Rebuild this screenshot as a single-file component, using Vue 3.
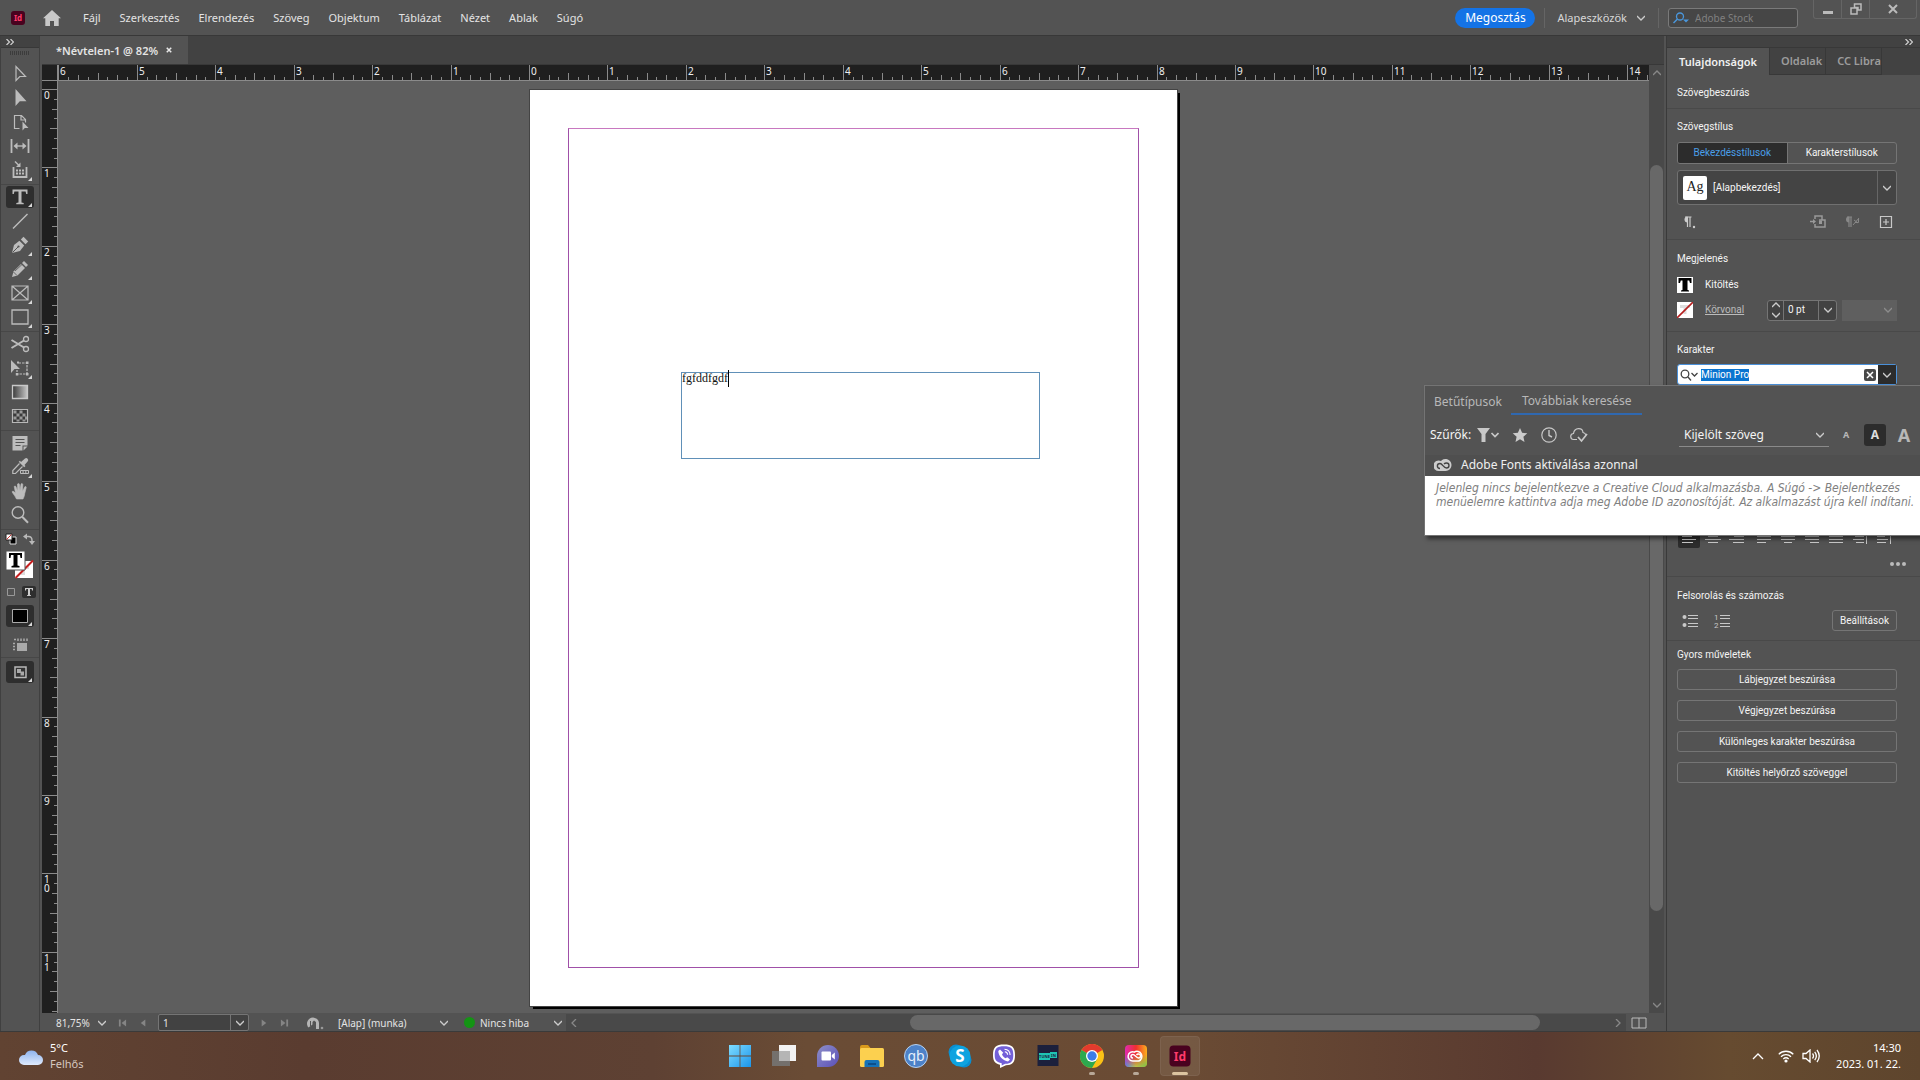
<script setup>
import { ref, computed, onMounted, onUnmounted } from 'vue'

const menus = ['Fájl', 'Szerkesztés', 'Elrendezés', 'Szöveg', 'Objektum', 'Táblázat', 'Nézet', 'Ablak', 'Súgó']

const stockQuery = ref('')
const fontName = ref('Minion Pro')
const pageNumber = ref('1')
const strokeWidth = ref('0 pt')

// toolbox icons, drawn on a 20x20 grid
const toolGroups = [
  [
    { name: 'Kijelölés', svg: '<path d="M6 2.500v14l3.800-4h5.700z" fill="none" stroke="currentColor" stroke-width="1.200"/>' },
    { name: 'Közvetlen kijelölés', svg: '<path d="M5.500 1v17l4.300-4.800h6.700z" fill="currentColor"/>' },
    { name: 'Oldal', svg: '<path d="M9.500 16.500H4.500v-13h7l4 4v3M11 3.500v4.500h4.500" fill="none" stroke="currentColor" stroke-width="1.200"/><path d="M12.500 9.500v9l2.300-2.500h3.700z" fill="currentColor"/>' },
    { name: 'Hézag', svg: '<path d="M1.500 3v14M18.500 3v14" stroke="currentColor" stroke-width="1.800"/><path d="M5 10h10" stroke="currentColor" stroke-width="1.400"/><path d="M3.500 10l4-3.500v7zM16.500 10l-4-3.500v7z" fill="currentColor"/>' },
    { name: 'Tartalomgyűjtő', more: true, svg: '<path d="M3.500 7v10h13V7" fill="none" stroke="currentColor" stroke-width="1.800"/><path d="M6 9.500h2v2H6zM9 9.500h2v2H9zM12 9.500h2v2h-2zM6 12.500h2v2H6zM9 12.500h2v2H9zM12 12.500h2v2h-2z" fill="currentColor"/><path d="M5 1.500l4 4" stroke="currentColor" stroke-width="1.500"/><path d="M10.500 2.500V7H6z" fill="currentColor"/>' }
  ],
  [
    { name: 'Szöveg', more: true, active: true, svg: '<path d="M2.500 2.500h15v4.500h-1.300l-.6-2.500h-4.100v11l2.200.5v1.200H6.300v-1.200l2.200-.5v-11H4.400L3.800 7H2.500z" fill="currentColor"/>' },
    { name: 'Vonal', svg: '<path d="M3 17.500L17.500 3" stroke="currentColor" stroke-width="1.500"/>' },
    { name: 'Toll', more: true, svg: '<path d="M2 18l2-8 5.400-4.200 4.800 4.800-4.200 5.400z" fill="currentColor"/><path d="M10.800 4.500l2.700-2.700 4.700 4.700-2.700 2.700z" fill="currentColor"/><path d="M2.500 17.500l5.500-5.500" stroke="#535353" stroke-width="1"/><circle cx="8.500" cy="11.500" r="1.100" fill="#535353"/>' },
    { name: 'Ceruza', more: true, svg: '<path d="M2 18l1.500-5.500 7.500-7.500 4 4-7.500 7.500z" fill="currentColor"/><path d="M12 4l2-2 4 4-2 2z" fill="currentColor"/><path d="M3.500 13l3.500 3.500M5 12l7-6.500" stroke="#535353" stroke-width=".8"/>' },
    { name: 'Téglalapkeret', more: true, svg: '<path d="M2 3h16v14H2zM2 3l16 14M18 3L2 17" fill="none" stroke="currentColor" stroke-width="1.200"/>' },
    { name: 'Téglalap', more: true, svg: '<path d="M2 3h16v14H2z" fill="none" stroke="currentColor" stroke-width="1.300"/>' }
  ],
  [
    { name: 'Olló', svg: '<path d="M1.500 6l12.500 7.500M1.500 14l12.500-7.500" stroke="currentColor" stroke-width="2"/><circle cx="16" cy="5" r="2.500" fill="none" stroke="currentColor" stroke-width="1.300"/><circle cx="16" cy="15" r="2.500" fill="none" stroke="currentColor" stroke-width="1.300"/>' },
    { name: 'Szabad átalakítás', more: true, svg: '<path d="M1 2v13l3.500-4h5.500z" fill="currentColor"/><path d="M8.500 5h8.500v11H7v-4" fill="none" stroke="currentColor" stroke-width="1.200" stroke-dasharray="2.500 1"/><path d="M7 3.500h2v2H7zM16 3.500h2.500V6H16zM16 15h2.500v2.500H16zM5.800 15h2.500v2.500H5.800z" fill="currentColor"/>' },
    { name: 'Színátmenet-színminta', svg: '<defs><linearGradient id="tool-grad"><stop offset="0" stop-color="#3a3a3a"/><stop offset="1" stop-color="#c8c8c8"/></linearGradient></defs><path d="M2.500 3.500h15v13h-15z" fill="url(#tool-grad)" stroke="#c8c8c8" stroke-width="1.300"/>' },
    { name: 'Színátmenet-lágyítás', svg: '<path d="M2.500 3.500h15v13h-15z" fill="#3a3a3a" stroke="#b8b8b8" stroke-width="1.200"/><path d="M3.500 4.500h3v3h-3zM9.500 4.500h3v3h-3zM6.500 7.500h3v3h-3zM12.500 7.500h3v3h-3zM3.500 10.500h3v3h-3zM9.500 10.500h3v3h-3zM15 10.500h2v3h-2zM6.500 13.500h3v2h-3zM12.500 13.500h3v2h-3z" fill="#999"/>' }
  ],
  [
    { name: 'Jegyzet', svg: '<path d="M2.500 3h15v9.500h-5V17.500h-10z" fill="currentColor"/><path d="M13.500 13.500h4l-4 4z" fill="currentColor"/><path d="M5.500 6.500h9M5.500 9.500h9M5.500 12.500h5" stroke="#535353" stroke-width="1.200"/>' },
    { name: 'Pipetta', more: true, svg: '<path d="M11 5l4-3.500a2 2 0 0 1 2.800 2.800L14.500 8l1 1-1.300 1.300-5.500-5.500L10 3.700z" fill="currentColor"/><path d="M9.500 6.500l-6.700 7v3h2.700l7-7" fill="none" stroke="currentColor" stroke-width="1.200"/><path d="M10.500 13.500h8v3h-8zM13.100 13.500v3M15.800 13.500v3" fill="none" stroke="currentColor" stroke-width="1"/>' },
    { name: 'Kéz', svg: '<path d="M6.500 18c-1.500-3-3.200-5-4.500-7.200.8-1 2-.5 3.500 1.400L4.200 5.500c.8-.8 1.600-.4 1.900.5L7.600 10 7.500 3c.8-.9 1.700-.6 1.900.3l.6 6.200 1-6.400c.7-.9 1.700-.5 1.800.4l-.3 6.800 2.300-4.500c.9-.6 1.600 0 1.400.9l-1.500 6c-.2 2.300-.8 3.500-1.700 5.300z" fill="currentColor" stroke="currentColor" stroke-width=".6"/>' },
    { name: 'Nagyító', svg: '<circle cx="8" cy="7.500" r="5.800" fill="none" stroke="currentColor" stroke-width="1.400"/><path d="M12.200 11.700l5.800 6" stroke="currentColor" stroke-width="2"/>' }
  ]
]

// one inch on screen at the current zoom level
const inch = 78.44

// visible ruler lengths: the window less the toolbox, panel and bars
const rulerWidth = ref(0)
const rulerHeight = ref(0)

function measure() {
  rulerWidth.value = window.innerWidth - 329
  rulerHeight.value = window.innerHeight - 147
}

measure()
onMounted(() => window.addEventListener('resize', measure))
onUnmounted(() => window.removeEventListener('resize', measure))

function makeTicks(start, from, length) {
  const ticks = []
  for (let i = from * 8; start + (i * inch) / 8 < length; i++) {
    const pos = Math.round(start + (i * inch) / 8)
    if (pos < 0) continue
    let size = 3
    if (i % 8 === 0) size = 15
    else if (i % 4 === 0) size = 7
    else if (i % 2 === 0) size = 5
    ticks.push({ pos, size, label: i % 8 === 0 ? String(Math.abs(i / 8)) : '' })
  }
  return ticks
}

const hTicks = computed(() => makeTicks(471, -6, rulerWidth.value))
const vTicks = computed(() => makeTicks(8, 0, rulerHeight.value))

// line layout of the nine paragraph alignment buttons
const aligns = [
  { name: 'Balra', d: 'M1 5.500h14M1 8.500h10M1 11.500h14M1 14.500h11', active: true },
  { name: 'Középre', d: 'M1 5.500h14M3 8.500h10M0 11.500h16M3 14.500h10' },
  { name: 'Jobbra', d: 'M1 5.500h14M5 8.500h10M0 11.500h15M4 14.500h11', last: true },
  { name: 'Sorkizárt balra', d: 'M1 5.500h14M1 8.500h14M1 11.500h14M1 14.500h9' },
  { name: 'Sorkizárt középre', d: 'M1 5.500h14M1 8.500h14M1 11.500h14M4 14.500h8' },
  { name: 'Sorkizárt jobbra', d: 'M1 5.500h14M1 8.500h14M1 11.500h14M6 14.500h9' },
  { name: 'Teljesen sorkizárt', d: 'M1 5.500h14M1 8.500h14M1 11.500h14M1 14.500h14' },
  { name: 'Gerinc felé', d: 'M1 5.500h11M3 8.500h9M1 11.500h11M4 14.500h8M14.500 3v13' },
  { name: 'Gerinctől el', d: 'M1 5.500h11M1 8.500h8M1 11.500h11M1 14.500h9M14.500 3v13' }
]

const quickActions = ['Lábjegyzet beszúrása', 'Végjegyzet beszúrása', 'Különleges karakter beszúrása', 'Kitöltés helyőrző szöveggel']

const apps = [
  { name: 'Start', svg: '<defs><linearGradient id="win" x1="0" y1="0" x2="1" y2="1"><stop offset="0" stop-color="#7fdcff"/><stop offset="1" stop-color="#1b95ea"/></linearGradient></defs><path d="M1 1h10.600v10.600H1zM12.400 1H23v10.600H12.400zM1 12.400h10.600V23H1zM12.400 12.400H23V23H12.400z" fill="url(#win)"/>' },
  { name: 'Feladatnézet', svg: '<path d="M7 1h17v16H7z" fill="#f2f2f2"/><path d="M0 7h18v15H0z" fill="#777" fill-opacity=".85"/><path d="M7 7h11v10H7z" fill="#b5b5b5"/>' },
  { name: 'Csevegés', svg: '<defs><linearGradient id="chat" x1="0" y1="0" x2="1" y2="1"><stop offset="0" stop-color="#8d8fc8"/><stop offset="1" stop-color="#5b4fb8"/></linearGradient></defs><path d="M1 23V12A11 11 0 1 1 12 23z" fill="url(#chat)"/><rect x="5.500" y="7.500" width="9.500" height="9" rx="1" fill="#fff"/><path d="M15.800 11l3-2.500v7l-3-2.500z" fill="#fff"/>' },
  { name: 'Fájlkezelő', svg: '<path d="M0 3a2 2 0 0 1 2-2h6l2.500 3H22v6H0z" fill="#d99a1c"/><rect y="4" width="24" height="19" rx="1.500" fill="#fcd04f"/><path d="M4.500 23v-5a2 2 0 0 1 2-2h11a2 2 0 0 1 2 2v5z" fill="#1572b8"/><path d="M8 19h8v2H8z" fill="#0c4f8c"/>' },
  { name: 'qBittorrent', svg: '<circle cx="12" cy="12" r="11.500" fill="#4d82c8" stroke="#b9d2ee"/><text x="12" y="16.500" text-anchor="middle" font-family="Noto Sans, sans-serif" font-size="14" fill="#e6f0fb">qb</text>' },
  { name: 'Skype', svg: '<circle cx="8" cy="8" r="7.500" fill="#0b8fd0"/><circle cx="16" cy="16" r="7.500" fill="#0b8fd0"/><circle cx="12" cy="12" r="10.500" fill="#0ea3e0"/><text x="12" y="18" text-anchor="middle" font-family="Noto Sans, sans-serif" font-weight="700" font-size="17" fill="#fff">S</text>' },
  { name: 'Viber', svg: '<path d="M12 .5c8 0 11 2.500 11 10.500s-3 10-9 10.300L8 24v-3.300C3 19.500 1 17.500 1 11 1 3 4 .5 12 .5z" fill="#fff"/><path d="M12 2.200c7 0 9.300 2 9.300 8.800s-2.300 8.600-8 8.800L9.700 21.500v-2.300C4.700 18.200 2.700 16.500 2.700 11c0-6.800 2.300-8.800 9.300-8.800z" fill="#7360d8"/><path d="M8 5.500L6.300 7c0 5 5 10 9.700 10.500l2-2-2.700-2.200-1.800 1c-1.700-.8-3-2.300-3.500-4l1.300-1.500z" fill="#fff"/><path d="M12.500 5.200c3.500.2 5.500 2.300 5.600 5.800M12.800 7.800c1.800.2 2.700 1.200 2.800 3" fill="none" stroke="#fff" stroke-width="1.100"/>' },
  { name: 'TuneIn', svg: '<rect x="1.500" y="1" width="21" height="21" fill="#1c203c"/><path d="M3 9h11v7H3zM14 8h7v6h-7z" fill="#1fc4b4"/><text x="8.500" y="14" text-anchor="middle" font-family="Noto Sans, sans-serif" font-weight="700" font-size="4" fill="#1c203c">TUNE</text><text x="17.500" y="12.700" text-anchor="middle" font-family="Noto Sans, sans-serif" font-weight="700" font-size="4" fill="#1c203c">IN</text>' },
  { name: 'Chrome', running: true, svg: '<circle cx="12" cy="12" r="12" fill="#fbc116"/><path d="M12 12L1.600 6A12 12 0 0 1 22.400 6z" fill="#e33b2e"/><path d="M12 12L1.600 6A12 12 0 0 0 12 24l5.200-9z" fill="#2da94f"/><circle cx="12" cy="12" r="6" fill="#fff"/><circle cx="12" cy="12" r="4.700" fill="#3b7de8"/>' },
  { name: 'Creative Cloud', running: true, svg: '<defs><linearGradient id="cc-top"><stop offset="0" stop-color="#e02bb0"/><stop offset=".5" stop-color="#f0302e"/><stop offset="1" stop-color="#fbb01e"/></linearGradient><linearGradient id="cc-low"><stop offset="0" stop-color="#3f8cf0"/><stop offset=".5" stop-color="#b8cf4a"/><stop offset="1" stop-color="#62c954"/></linearGradient><linearGradient id="cc-fade" x1="0" y1="0" x2="0" y2="1"><stop offset=".45" stop-color="#000"/><stop offset="1" stop-color="#fff"/></linearGradient><mask id="cc-mask"><path d="M0 0h24v24H0z" fill="url(#cc-fade)"/></mask></defs><rect x="1" y="1" width="22" height="22" rx="4" fill="url(#cc-top)"/><rect x="1" y="1" width="22" height="22" rx="4" fill="url(#cc-low)" mask="url(#cc-mask)"/><path d="M9 17a4.600 4.600 0 1 1 1.300-8.900A5 5 0 1 1 14.800 17z" fill="none" stroke="#fff" stroke-width="1.500"/><path d="M9 14c-2.700 0-2.700-3.500 0-3.500 2 0 3 3.500 5.500 3.500 2.800 0 2.800-4 0-4-1 0-1.700.5-2 1" fill="none" stroke="#fff" stroke-width="1.500"/>' },
  { name: 'InDesign', active: true, svg: '<rect x="1.500" y="1.500" width="21" height="21" rx="4" fill="#49021f"/><text x="12" y="16.500" text-anchor="middle" font-family="Noto Sans, sans-serif" font-weight="700" font-size="12" fill="#ff3a6b">Id</text>' }
]
</script>

<template>
  <div class="app">
    <header class="topbar">
      <svg class="logo" viewBox="0 0 14 14"><rect width="14" height="14" rx="3" fill="#49021f" /><text x="7" y="10" text-anchor="middle" font-size="8" font-weight="700" fill="#ff3a6b">Id</text></svg>
      <svg class="home" viewBox="0 0 18 16"><path d="M9 0l9 8.200h-2.300V16H11v-5H7v5H2.300V8.200H0z" fill="#c8c8c8" /></svg>
      <nav class="menu">
        <button v-for="m in menus" :key="m">{{ m }}</button>
      </nav>
      <button class="share">Megosztás</button>
      <button class="workspace">Alapeszközök
        <svg class="chev" viewBox="0 0 8 8"><path d="M0 2l4 4 4-4" /></svg>
      </button>
      <label class="stock">
        <svg viewBox="0 0 16 12"><circle cx="7" cy="4.500" r="3.500" fill="none" stroke="#4a97dc" stroke-width="1.300" /><path d="M4.500 7L.5 11" stroke="#4a97dc" stroke-width="1.500" /><path d="M10 7.500h6l-3 3z" fill="#4a97dc" /></svg>
        <input v-model="stockQuery" type="text" placeholder="Adobe Stock" aria-label="Adobe Stock">
      </label>
      <div class="window-buttons">
        <button aria-label="Kis méret"><svg viewBox="0 0 12 12"><path d="M1 8h10v3H1z" fill="#bbb" /></svg></button>
        <button aria-label="Előző méret"><svg viewBox="0 0 12 12"><path d="M4.500 1h6.500v6h-3V4.500h-3.500zM1 5h6v6H1z" fill="none" stroke="#bbb" stroke-width="1.500" /></svg></button>
        <button class="close" aria-label="Bezárás"><svg viewBox="0 0 12 12"><path d="M2 2l8 8M10 2l-8 8" stroke="#bbb" stroke-width="2" /></svg></button>
      </div>
    </header>

    <main class="workarea">
      <aside class="toolbox">
        <div class="dock-head left"><svg viewBox="0 0 8 6"><path d="M.5 0l3 3-3 3M4.500 0l3 3-3 3" /></svg></div>
        <div class="grip"></div>
        <div v-for="(group, g) in toolGroups" :key="g" class="tool-group">
          <button v-for="t in group" :key="t.name" :class="['tool', { active: t.active, more: t.more }]" :aria-label="t.name">
            <svg viewBox="0 0 20 20" v-html="t.svg"></svg>
          </button>
        </div>
        <div class="swap">
          <svg viewBox="0 0 12 12"><path d="M5 4h6v7H5z" fill="#000" stroke="#ddd" /><path d="M1 1h6v6H1z" fill="#fff" stroke="#222" /><path d="M1.500 6.500l5-5" stroke="#c33" /></svg>
          <svg viewBox="0 0 12 12"><path d="M3 3.500h2.500q3.500 0 3.500 4V9" fill="none" stroke="#b8b8b8" stroke-width="1.500" /><path d="M0 3.500L4 .5v6zM9 12L6 8h6z" fill="#b8b8b8" /></svg>
        </div>
        <svg class="fill-stroke" viewBox="0 0 28 28">
          <path d="M9 10h18v17H9z" fill="#fff" /><path d="M12 15h11v3h-4v6h-4v-6h-3z" fill="#ddd" /><path d="M9.500 27L27 9.500" stroke="#c62020" stroke-width="2" />
          <path d="M0 0h19v19H0z" fill="#fff" stroke="#555" /><path d="M3 2h13v5h-1.500L14 4h-2.500v10.500l2 .5v1.500h-8V15l2-.5V4H5l-.5 3H3z" fill="#000" />
        </svg>
        <div class="targets">
          <button aria-label="Keret formázása"><svg viewBox="0 0 10 10"><path d="M1.500 1.500h7v7h-7z" fill="none" stroke="#999" /></svg></button>
          <button class="on" aria-label="Szöveg formázása"><svg viewBox="0 0 10 10"><path d="M1 1h8v2.500H8L7.700 2H6v6l1 .3V9H3v-.7L4 8V2H2.300L2 3.500H1z" fill="#ccc" /></svg></button>
        </div>
        <button class="tool active more" aria-label="Szín alkalmazása"><svg viewBox="0 0 20 20"><path d="M2.500 3.500h15v13h-15z" fill="#000" stroke="#aaa" /></svg></button>
        <button class="tool view" aria-label="Nézetbeállítások"><svg viewBox="0 0 20 20"><path d="M7 8h10v8H7z" fill="#aaa" /><path d="M4 4.500h2M8 3.500v2.500M11 3.500v2.500M14 3.500v2.500M17 3.500v2.500M3 8.500h2M3 11.500h2M3 14.500h2" stroke="#aaa" stroke-width="1.500" /></svg></button>
        <div class="rule"></div>
        <button class="tool active more" aria-label="Képernyőmód"><svg viewBox="0 0 20 20"><path d="M5 5h11v10.500H5z" fill="#333" stroke="#b8b8b8" stroke-width="1.500" /><path d="M7 7h4v4H7zM10.500 9.500h3.500v4h-3.500z" fill="#aaa" /></svg></button>
      </aside>

      <section class="document">
        <div class="doc-tabs">
          <div class="doc-tab">*Névtelen-1 @ 82% <button aria-label="Lap bezárása"><svg viewBox="0 0 8 8"><path d="M1 1l6 6M7 1L1 7" /></svg></button></div>
        </div>
        <div class="doc-body">
          <div class="ruler-corner"></div>
          <svg class="ruler-h" height="16">
            <g v-for="t in hTicks" :key="t.pos">
              <path :d="`M${t.pos + 0.5} ${15 - t.size}V15`" />
              <text v-if="t.label" :x="t.pos + 2" y="10">{{ t.label }}</text>
            </g>
          </svg>
          <svg class="ruler-v" width="16">
            <g v-for="t in vTicks" :key="t.pos">
              <path :d="`M${15 - t.size} ${t.pos + 0.5}H15`" />
              <text v-for="(digit, i) in t.label" :key="i" x="2" :y="t.pos + 10 + i * 9">{{ digit }}</text>
            </g>
          </svg>
          <div class="canvas">
            <div class="page">
              <div class="margins"></div>
              <div class="text-frame">fgfddfgdf<span class="caret"></span></div>
            </div>
          </div>
          <div class="scroll-v">
            <svg class="chev" viewBox="0 0 8 8"><path d="M0 6l4-4 4 4" /></svg>
            <div class="track"><div class="thumb"></div></div>
            <svg class="chev" viewBox="0 0 8 8"><path d="M0 2l4 4 4-4" /></svg>
          </div>
        </div>
        <footer class="status">
          <button class="zoom">81,75% <svg class="chev" viewBox="0 0 8 8"><path d="M0 2l4 4 4-4" /></svg></button>
          <button class="nav" aria-label="Első oldal"><svg viewBox="0 0 10 10"><path d="M1 1h2v8H1zM9 1v8L4 5z" /></svg></button>
          <button class="nav" aria-label="Előző oldal"><svg viewBox="0 0 10 10"><path d="M7 1v8L2 5z" /></svg></button>
          <div class="page-box">
            <input v-model="pageNumber" type="text" aria-label="Oldal">
            <button aria-label="Oldalak listája"><svg class="chev" viewBox="0 0 8 8"><path d="M0 2l4 4 4-4" /></svg></button>
          </div>
          <button class="nav" aria-label="Következő oldal"><svg viewBox="0 0 10 10"><path d="M3 1v8l5-4z" /></svg></button>
          <button class="nav" aria-label="Utolsó oldal"><svg viewBox="0 0 10 10"><path d="M7 1h2v8H7zM1 1v8l5-4z" /></svg></button>
          <svg class="open-icon" viewBox="0 0 18 14"><path d="M2.500 11.500A6 6 0 1 1 13 8v5h-3V6L8 4.500 6.500 6v2.500z" fill="#b5b5b5" /><path d="M4.500 5v5" stroke="#535353" stroke-width="1" /><circle cx="16" cy="12" r="1.300" fill="#999" /></svg>
          <button class="preflight">[Alap] (munka) <svg class="chev" viewBox="0 0 8 8"><path d="M0 2l4 4 4-4" /></svg></button>
          <button class="errors"><i></i>Nincs hiba <svg class="chev" viewBox="0 0 8 8"><path d="M0 2l4 4 4-4" /></svg></button>
          <div class="scroll-h">
            <svg class="chev" viewBox="0 0 8 8"><path d="M6 0L2 4l4 4" /></svg>
            <div class="track"><div class="thumb"></div></div>
            <svg class="chev" viewBox="0 0 8 8"><path d="M2 0l4 4-4 4" /></svg>
          </div>
          <button class="split" aria-label="Osztott nézet"><svg viewBox="0 0 16 12"><path d="M1 1h14v10H1zM8 1v10" /></svg></button>
        </footer>
      </section>

      <aside class="panel">
        <div class="dock-head right"><svg viewBox="0 0 8 6"><path d="M.5 0l3 3-3 3M4.500 0l3 3-3 3" /></svg></div>
        <div class="tabs">
          <button class="tab on">Tulajdonságok</button>
          <button class="tab">Oldalak</button>
          <button class="tab cut">CC Libra</button>
        </div>

        <section class="block context"><h2>Szövegbeszúrás</h2></section>

        <section class="block styles">
          <h2>Szövegstílus</h2>
          <div class="segmented">
            <button class="on">Bekezdésstílusok</button>
            <button>Karakterstílusok</button>
          </div>
          <button class="style-pick">
            <span class="sample">Ag</span>
            <span class="style-name">[Alapbekezdés]</span>
            <span class="drop"><svg class="chev" viewBox="0 0 8 8"><path d="M0 2l4 4 4-4" /></svg></span>
          </button>
          <div class="style-icons">
            <svg viewBox="0 0 16 16"><path d="M9 3v10M6.500 3v10M4 3h6.500" stroke="#ccc" stroke-width="1.200" /><path d="M6.500 2.500v6a3 3 0 0 1 0-6z" fill="#ccc" /><circle cx="13" cy="13" r="1.200" fill="#ccc" /></svg>
            <span class="push"></span>
            <svg viewBox="0 0 16 16"><path d="M5 5V2h7v4M9 6h6v7H5v-3M0 7.500h4" fill="none" stroke="#999" stroke-width="1.500" /><path d="M3 5l3 2.500L3 10zM9 6.500h3V10H9z" fill="#999" /></svg>
            <svg viewBox="0 0 16 16"><path d="M7 3v10M5 3v10M3 3h5" stroke="#888" stroke-width="1.200" /><path d="M5 2.500v6a3 3 0 0 1 0-6z" fill="#888" /><path d="M9 11l6-7M10 6l4 3M14.500 5v3.500H11" fill="none" stroke="#888" /></svg>
            <svg viewBox="0 0 16 16"><path d="M2.500 2.500h11v11h-11zM8 5v6M5 8h6" fill="none" stroke="#c8c8c8" stroke-width="1.200" /></svg>
          </div>
        </section>

        <section class="block look">
          <h2>Megjelenés</h2>
          <div class="look-row">
            <svg viewBox="0 0 16 16"><path d="M0 0h16v16H0z" fill="#fff" /><path d="M1.500 1h13v5h-1.500l-.8-2.500H10.500v9.500l1.500.5v1H4v-1l1.500-.5V3.500H3.800L3 6H1.500z" fill="#000" /></svg>
            <span>Kitöltés</span>
          </div>
          <div class="look-row">
            <svg viewBox="0 0 16 16"><path d="M0 0h16v16H0z" fill="#fff" /><path d="M3 3h10v3h-3.500v6h-3V6H3z" fill="#ddd" /><path d="M0 16L16 0" stroke="#b52020" stroke-width="1.600" /></svg>
            <a href="#">Körvonal</a>
            <div class="stepper">
              <span class="arrows"><svg class="chev" viewBox="0 0 8 8"><path d="M0 6l4-4 4 4" /></svg><svg class="chev" viewBox="0 0 8 8"><path d="M0 2l4 4 4-4" /></svg></span>
              <input v-model="strokeWidth" type="text" aria-label="Körvonal vastagsága">
              <button aria-label="Vastagságok"><svg class="chev" viewBox="0 0 8 8"><path d="M0 2l4 4 4-4" /></svg></button>
            </div>
            <button class="stroke-type" disabled aria-label="Körvonal típusa"><svg class="chev" viewBox="0 0 8 8"><path d="M0 2l4 4 4-4" /></svg></button>
          </div>
        </section>

        <section class="block character">
          <h2>Karakter</h2>
          <div class="font-field">
            <svg class="lens" viewBox="0 0 18 12"><circle cx="5" cy="5" r="3.800" /><path d="M8 8l3 3.500M11.500 4l3 3 3-3" /></svg>
            <label class="font-input"><input v-model="fontName" type="text" size="1" aria-label="Betűtípus"></label>
            <button class="clear" aria-label="Törlés"><svg viewBox="0 0 12 12"><rect width="12" height="12" rx="2" fill="#484848" /><path d="M3 3l6 6M9 3l-6 6" stroke="#fff" stroke-width="1.500" /></svg></button>
            <button class="open" aria-label="Betűtípusok listája"><svg class="chev" viewBox="0 0 8 8"><path d="M0 2l4 4 4-4" /></svg></button>

            <div class="font-menu">
              <div class="fm-tabs">
                <button>Betűtípusok</button>
                <button class="on">Továbbiak keresése</button>
              </div>
              <div class="fm-filters">
                <span>Szűrők:</span>
                <button aria-label="Osztályozás szerint"><svg class="funnel" viewBox="0 0 22 14"><path d="M0 0h13L8.500 6v8h-4V6z" fill="#c8c8c8" /><path d="M14.500 5l3.500 3.500L21.500 5" fill="none" stroke="#c8c8c8" stroke-width="1.700" /></svg></button>
                <button aria-label="Kedvencek"><svg viewBox="0 0 16 16"><path d="M8 1l2.100 4.800 5.200.5-3.900 3.500 1.100 5.100L8 12.300l-4.500 2.600 1.100-5.100L.7 6.300l5.200-.5z" fill="#ccc" /></svg></button>
                <button aria-label="Legutóbbiak"><svg viewBox="0 0 16 16"><path d="M8 3v5.500l3 1.500" fill="none" stroke="#c8c8c8" stroke-width="1.400" /><circle cx="8" cy="8" r="7.200" fill="none" stroke="#c8c8c8" stroke-width="1.200" /></svg></button>
                <button aria-label="Aktivált"><svg class="cloud" viewBox="0 0 18 16"><path d="M7 12.500H4a3 3 0 0 1-.5-6C4.500 0 12.500.5 13 5.500c1.500.3 2.500 1 2.800 2.500" fill="none" stroke="#c8c8c8" stroke-width="1.200" /><path d="M8 10l3.500 4L17 7" fill="none" stroke="#c8c8c8" stroke-width="1.700" /></svg></button>
                <span class="push"></span>
                <button class="sample-pick">Kijelölt szöveg <svg class="chev" viewBox="0 0 8 8"><path d="M0 2l4 4 4-4" /></svg></button>
                <button class="size small" aria-label="Kis minta">A</button>
                <button class="size medium" aria-label="Közepes minta">A</button>
                <button class="size large" aria-label="Nagy minta">A</button>
              </div>
              <div class="fm-activate">
                <svg viewBox="0 0 18 14"><path d="M5.500 13a5.300 5.300 0 1 1 1.500-10A6 6 0 1 1 11.500 13z" fill="#ccc" /><path d="M6 10.500c-3.500 0-3.500-5 0-5 2.500 0 3.500 4.500 6.500 4.500 3.300 0 3.300-5 0-5-1.500 0-2.500 1-2.500 1" fill="none" stroke="#444" stroke-width="1.400" /></svg>
                Adobe Fonts aktiválása azonnal
              </div>
              <p>Jelenleg nincs bejelentkezve a Creative Cloud alkalmazásba. A Súgó -&gt; Bejelentkezés<br>menüelemre kattintva adja meg Adobe ID azonosítóját. Az alkalmazást újra kell indítani.</p>
            </div>
          </div>
        </section>

        <section class="block paragraph">
          <div class="aligns">
            <button v-for="a in aligns" :key="a.name" :class="{ on: a.active, last: a.last }" :aria-label="a.name">
              <svg viewBox="0 0 16 18"><path :d="a.d" /></svg>
            </button>
          </div>
          <button class="dots" aria-label="További beállítások"><i></i><i></i><i></i></button>
        </section>

        <section class="block lists">
          <h2>Felsorolás és számozás</h2>
          <div class="list-row">
            <button aria-label="Felsorolás"><svg viewBox="0 0 16 16"><circle cx="2.500" cy="4" r="2" fill="#c8c8c8" /><circle cx="2.500" cy="12" r="2" fill="#c8c8c8" /><path d="M6 2.500h10M6 5.500h10M6 10.500h10M6 13.500h10" stroke="#c8c8c8" /></svg></button>
            <button aria-label="Számozás"><svg viewBox="0 0 16 16"><text x="0" y="7" font-size="8">1</text><text x="0" y="15" font-size="8">2</text><path d="M6 2.500h10M6 5.500h10M6 10.500h10M6 13.500h10" stroke="#c8c8c8" /></svg></button>
            <span class="push"></span>
            <button class="outlined settings">Beállítások</button>
          </div>
        </section>

        <section class="block quick">
          <h2>Gyors műveletek</h2>
          <button v-for="q in quickActions" :key="q" class="outlined">{{ q }}</button>
        </section>
      </aside>
    </main>

    <footer class="taskbar">
      <div class="weather">
        <svg viewBox="0 0 24 18"><defs><linearGradient id="cloud" x1="0" y1="0" x2="0" y2="1"><stop offset="0" stop-color="#8fb4ee" /><stop offset="1" stop-color="#dfeafc" /></linearGradient></defs><path d="M5 18a5 5 0 0 1 0-10h1a7 7 0 0 1 13 0 5 5 0 0 1 0 10z" fill="url(#cloud)" /></svg>
        <div><div>5°C</div><div class="dim">Felhős</div></div>
      </div>
      <div class="apps">
        <button v-for="a in apps" :key="a.name" :class="['app-button', { running: a.running, active: a.active }]" :aria-label="a.name">
          <svg viewBox="0 0 24 24" v-html="a.svg"></svg>
        </button>
      </div>
      <div class="tray">
        <svg class="up" viewBox="0 0 12 12"><path d="M1 9l5-5 5 5" /></svg>
        <svg class="wifi" viewBox="0 0 16 14"><path d="M.7 5.300a10.300 10.300 0 0 1 14.600 0M3 7.800a7 7 0 0 1 10 0M5.300 10a4 4 0 0 1 5.400 0" /><circle cx="8" cy="12" r="1.600" fill="#fff" stroke="none" /></svg>
        <svg class="sound" viewBox="0 0 18 14"><path d="M1 4.500h3l4-3.500v12l-4-3.500H1zM10.500 4.500q2 2.500 0 5M12.700 2.800q3.300 4.200 0 8.400M15 1q4.500 6 0 12" /></svg>
        <div class="clock"><div>14:30</div><div>2023. 01. 22.</div></div>
      </div>
    </footer>
  </div>
</template>

<style>
body {
  background: #535353;
  overflow: hidden;
}
</style>

<style scoped>
.app {
  height: 100vh;
  display: flex;
  flex-direction: column;
  font-family: "Noto Sans", "Open Sans", sans-serif;
  font-size: 11px;
  color: #e4e4e4;
  background: #535353;
}

* {
  box-sizing: border-box;
}

button,
input {
  font: inherit;
  color: inherit;
  background: none;
  border: 0;
  margin: 0;
  padding: 0;
  min-width: 0;
}

svg {
  display: block;
  flex: none;
}

h2,
p {
  margin: 0;
}

.chev {
  width: 8px;
  height: 8px;
  fill: none;
  stroke: #ccc;
  stroke-width: 1.300;
}

.push {
  flex: 1;
}

/* top bar */
.topbar {
  height: 36px;
  flex: none;
  display: flex;
  align-items: center;
  padding-right: 3px;
  padding-left: 11px;
  border-bottom: 1px solid #383838;
}

.logo {
  width: 14px;
  height: 14px;
}

.home {
  width: 18px;
  height: 16px;
  margin: 0 22px 0 18px;
}

.menu {
  flex: 1;
  display: flex;
  gap: 19px;
}

.share {
  width: 80px;
  height: 20px;
  border-radius: 10px;
  background: #1473e6;
  color: #fff;
  font-size: 12px;
  line-height: 16px;
}

.workspace {
  height: 20px;
  margin: 0 9px;
  padding: 0 13px 0 12px;
  display: flex;
  align-items: center;
  gap: 10px;
  border-left: 1px solid #656565;
  border-right: 1px solid #656565;
  color: #d8d8d8;
}

.stock {
  width: 130px;
  height: 20px;
  display: flex;
  align-items: center;
  gap: 6px;
  padding: 0 4px;
  border: 1px solid #7a7a7a;
  border-radius: 3px;
  background: #464646;
}

.stock svg {
  width: 16px;
  height: 12px;
}

.stock input {
  flex: 1;
  font-size: 10px;
}

.stock input::placeholder {
  color: #808080;
  opacity: 1;
}

.window-buttons {
  display: flex;
  align-self: flex-start;
  height: 19px;
  margin-left: 15px;
  border: 1px solid #656565;
  border-top: 0;
  border-radius: 0 0 3px 3px;
}

.window-buttons button {
  width: 28px;
  display: grid;
  place-items: center;
  border-right: 1px solid #656565;
}

.window-buttons .close {
  width: 46px;
  border-right: 0;
}

.window-buttons svg {
  width: 12px;
  height: 12px;
}

.workarea {
  flex: 1;
  min-height: 0;
  display: flex;
  border-bottom: 1px solid #3a3a3a;
}

/* toolbox */
.toolbox {
  width: 40px;
  flex: none;
  display: flex;
  flex-direction: column;
  align-items: center;
  border-left: 1px solid #404040;
  border-right: 1px solid #404040;
  color: #bcbcbc;
}

.dock-head {
  align-self: stretch;
  height: 12px;
  flex: none;
  display: flex;
  align-items: center;
  padding: 0 5px;
  background: #424242;
  border-bottom: 1px solid #383838;
}

.dock-head.right {
  justify-content: flex-end;
  padding-right: 7px;
}

.dock-head svg {
  width: 8px;
  height: 6px;
  fill: none;
  stroke: #d0d0d0;
  stroke-width: 1.200;
}

.grip {
  width: 20px;
  height: 4px;
  margin: 3px 0 7px;
  flex: none;
  background: repeating-linear-gradient(90deg, #3c3c3c 0 1px, #535353 1px 2px);
}

.tool-group {
  align-self: stretch;
  padding-bottom: 2px;
  border-bottom: 1px solid #474747;
  display: flex;
  flex-direction: column;
  align-items: center;
}

.tool {
  position: relative;
  width: 28px;
  height: 24px;
  flex: none;
  display: grid;
  place-items: center;
  border-radius: 3px;
}

.tool svg {
  width: 20px;
  height: 20px;
}

.tool.active {
  background: #2e2e2e;
  height: 22px;
}

.tool-group .tool.active {
  margin: 1px 0;
}

.tool.more::after {
  content: "";
  position: absolute;
  right: 2px;
  bottom: 1px;
  border-left: 4px solid transparent;
  border-bottom: 4px solid #d8d8d8;
}

.swap {
  display: flex;
  gap: 6px;
  margin: 3px 0 6px;
}

.swap svg {
  width: 12px;
  height: 12px;
}

.fill-stroke {
  width: 28px;
  height: 28px;
}

.targets {
  display: flex;
  gap: 4px;
  margin: 7px 0;
}

.targets button {
  width: 14px;
  height: 12px;
  display: grid;
  place-items: center;
  border-radius: 2px;
}

.targets .on {
  background: #2e2e2e;
}

.targets svg {
  width: 10px;
  height: 10px;
}

.view {
  margin: 6px 0 0;
}

.rule {
  align-self: stretch;
  height: 1px;
  margin-bottom: 3px;
  background: #474747;
}

/* document */
.document {
  flex: 1;
  min-width: 0;
  display: flex;
  flex-direction: column;
  margin-left: 2px;
}

.doc-tabs {
  height: 29px;
  flex: none;
  display: flex;
  background: #424242;
  border-bottom: 1px solid #383838;
}

.doc-tab {
  display: flex;
  align-items: center;
  gap: 8px;
  padding: 0 16px 0 14px;
  background: #535353;
  font-weight: 600;
}

.doc-tab svg {
  width: 6px;
  height: 6px;
  fill: none;
  stroke: #e8e8e8;
  stroke-width: 2;
}

.doc-body {
  flex: 1;
  min-height: 0;
  display: grid;
  grid-template-columns: 16px 1fr 15px;
  grid-template-rows: 16px 1fr;
}

.ruler-corner {
  background: #1f1f1f;
  border-right: 1px solid #8a8a8a;
  border-bottom: 1px solid #8a8a8a;
}

.ruler-h {
  width: 100%;
  background: #1f1f1f;
  border-bottom: 1px solid #8a8a8a;
  overflow: hidden;
}

.ruler-v {
  grid-column: 1;
  grid-row: 2;
  height: 100%;
  background: #1f1f1f;
  border-right: 1px solid #8a8a8a;
  overflow: hidden;
}

.ruler-h path,
.ruler-v path {
  stroke: #8a8a8a;
}

.ruler-h text,
.ruler-v text {
  fill: #eee;
  font-size: 10px;
}

.canvas {
  grid-column: 2;
  grid-row: 2;
  min-height: 0;
  display: flex;
  justify-content: center;
  align-items: flex-start;
  padding-top: 9px;
  background: #5e5e5e;
  overflow: hidden;
}

.page {
  position: relative;
  width: 647px;
  height: 916px;
  flex: none;
  padding: 38px;
  background: #fff;
  box-shadow: 0 0 0 1px #444, 3px 3px 0 #000;
}

.margins {
  height: 100%;
  border: 1px solid #a050a8;
  border-top-color: #c878c0;
}

.text-frame {
  position: absolute;
  left: 151px;
  top: 282px;
  width: 359px;
  height: 87px;
  border: 1px solid #6090b8;
  font: 12px/10px "Liberation Serif", serif;
  color: #111;
}

.caret {
  display: inline-block;
  width: 1px;
  height: 17px;
  margin: -5px 0;
  background: #000;
}

.scroll-v {
  grid-column: 3;
  grid-row: 1 / 3;
  display: flex;
  flex-direction: column;
  align-items: center;
  padding: 4px 0;
  background: #494949;
}

.scroll-v .chev,
.scroll-h .chev {
  stroke: #888;
}

.scroll-v .track {
  flex: 1;
  width: 13px;
  display: flex;
  flex-direction: column;
}

.scroll-v .track::before {
  content: "";
  flex: 88;
}

.scroll-v .track::after {
  content: "";
  flex: 90;
}

.scroll-v .thumb {
  flex: 748;
  border-radius: 7px;
  background: #686868;
}

/* status bar */
.status {
  height: 18px;
  flex: none;
  display: flex;
  align-items: center;
  padding-top: 1px;
  padding-left: 14px;
  font-size: 10px;
}

.status button {
  display: flex;
  align-items: center;
}

.zoom {
  width: 50px;
  justify-content: space-between;
}

.nav {
  width: 21px;
  justify-content: center;
}

.nav svg {
  width: 9px;
  height: 10px;
  fill: #858585;
}

.zoom + .nav {
  margin-left: 6px;
}

.page-box {
  width: 91px;
  height: 17px;
  display: flex;
  margin: 0 4px;
  border: 1px solid #757575;
  border-radius: 2px;
  background: #424242;
}

.page-box input {
  flex: 1;
  padding-left: 4px;
}

.page-box button {
  width: 18px;
  justify-content: center;
  border-left: 1px solid #757575;
}

.open-icon {
  width: 18px;
  height: 14px;
  margin: 0 14px 0 11px;
}

.preflight {
  width: 110px;
  justify-content: space-between;
}

.errors {
  width: 98px;
  margin: 0 4px 0 16px;
}

.errors i {
  width: 11px;
  height: 11px;
  margin-right: 5px;
  border-radius: 50%;
  background: #149414;
}

.errors .chev {
  margin-left: auto;
}

.scroll-h {
  flex: 1;
  align-self: stretch;
  display: flex;
  align-items: center;
  padding: 0 4px;
  background: #494949;
}

.scroll-h .track {
  flex: 1;
  height: 15px;
  display: flex;
}

.scroll-h .track::before {
  content: "";
  flex: 332;
}

.scroll-h .track::after {
  content: "";
  flex: 74;
}

.scroll-h .thumb {
  flex: 630;
  border-radius: 8px;
  background: #686868;
}

.split {
  margin: 0 17px 0 5px;
}

.split svg {
  width: 16px;
  height: 12px;
  fill: none;
  stroke: #bbb;
}

/* properties panel */
.panel {
  position: relative;
  z-index: 2;
  width: 254px;
  flex: none;
  margin-left: 2px;
  border-left: 1px solid #3a3a3a;
  font-family: Roboto, "Noto Sans", sans-serif;
  font-size: 10px;
  line-height: 14px;
  color: #f4f4f4;
}

.tabs {
  height: 27px;
  display: flex;
  background: #424242;
  font-family: "Noto Sans", sans-serif;
  font-size: 11px;
  font-weight: 600;
}

.tab {
  padding: 0 3px 0 11px;
  border-right: 1px solid #383838;
  border-bottom: 1px solid #383838;
  color: #9c9c9c;
}

.tab.on {
  padding: 0 12px;
  background: #535353;
  border-bottom: 0;
  color: #f0f0f0;
}

.tab.cut {
  padding-right: 0;
}

.block {
  padding-left: 10px;
  padding-right: 23px;
  border-bottom: 1px solid #494949;
}

.block h2 {
  font-size: 10px;
  font-weight: 400;
}

.context {
  padding-top: 11px;
  padding-bottom: 8px;
}

.styles {
  padding-top: 11px;
  padding-bottom: 9px;
}

.segmented {
  display: flex;
  height: 22px;
  margin: 8px 0 6px;
  border: 1px solid #757575;
  border-radius: 3px;
  overflow: hidden;
}

.segmented button {
  flex: 1;
}

.segmented .on {
  background: #2c2c2c;
  border-right: 1px solid #757575;
  color: #4a9fe8;
}

.style-pick {
  width: 100%;
  height: 35px;
  display: flex;
  align-items: center;
  padding-left: 5px;
  border: 1px solid #707070;
  border-radius: 3px;
  background: #444;
}

.sample {
  width: 24px;
  height: 24px;
  border-radius: 2px;
  background: #fff;
  color: #222;
  font: 14px/22px "Liberation Serif", serif;
}

.style-name {
  flex: 1;
  margin-left: 6px;
  text-align: left;
}

.drop {
  width: 19px;
  height: 33px;
  display: grid;
  place-items: center;
  border-left: 1px solid #666;
}

.style-icons {
  display: flex;
  gap: 18px;
  margin-top: 9px;
  padding: 0 3px 0 4px;
}

.style-icons svg {
  width: 16px;
  height: 16px;
}

.look {
  padding-top: 12px;
  padding-bottom: 10px;
}

.look-row {
  height: 22px;
  display: flex;
  align-items: center;
}

.look-row:nth-child(2) {
  margin: 8px 0 3px;
}

.look-row svg:first-child:not(.chev) {
  width: 16px;
  height: 16px;
  margin-right: 12px;
}

.look-row a {
  width: 41px;
  color: #bbb;
}

.stepper {
  width: 70px;
  height: 21px;
  display: flex;
  margin-left: auto;
  border: 1px solid #757575;
  border-radius: 3px;
  background: #424242;
}

.arrows {
  width: 16px;
  display: flex;
  flex-direction: column;
  align-items: center;
  justify-content: space-around;
  border-right: 1px solid #757575;
}

.stepper input {
  width: 34px;
  padding-left: 4px;
}

.stepper button {
  flex: 1;
  display: grid;
  place-items: center;
  border-left: 1px solid #757575;
}

.stroke-type {
  width: 55px;
  height: 21px;
  margin-left: 5px;
  padding-right: 5px;
  display: flex;
  align-items: center;
  justify-content: flex-end;
  background: #5f5f5f;
}

.stroke-type .chev {
  stroke: #8c8c8c;
}

.character {
  padding-top: 11px;
  border-bottom: 0;
}

.font-field {
  position: relative;
  height: 21px;
  display: flex;
  align-items: center;
  margin-top: 7px;
  border: 1px solid #4a90d9;
  border-radius: 3px;
  background: #fff;
}

.lens {
  width: 18px;
  height: 12px;
  margin: 0 3px 0 2px;
  fill: none;
  stroke: #444;
  stroke-width: 1.300;
}

.font-input {
  flex: 1;
  display: flex;
}

/* the whole name is selected, so the box hugs the text */
.font-input input {
  field-sizing: content;
  height: 12px;
  background: #0a74d0;
  color: #fff;
}

.clear svg {
  width: 12px;
  height: 12px;
}

.open {
  width: 18px;
  height: 100%;
  margin-left: 2px;
  display: grid;
  place-items: center;
  background: #2c2c2c;
}

/* font menu hangs below the font field */
.font-menu {
  position: absolute;
  top: 20px;
  right: -24px;
  width: 496px;
  height: 151px;
  border: 1px solid #747474;
  border-right: 0;
  background: #fff;
  box-shadow: 3px 3px 4px rgba(0, 0, 0, 0.5);
  font-family: "Noto Sans", sans-serif;
  font-size: 12px;
  line-height: 16px;
}

.fm-tabs {
  height: 29px;
  display: flex;
  gap: 9px;
  padding-left: 9px;
  background: #535353;
  color: #b8b8b8;
}

.fm-tabs button {
  padding: 4px 0 2px;
}

.fm-tabs .on {
  padding: 4px 11px 2px;
  border-bottom: 2px solid #2f68b0;
}

.fm-filters {
  height: 40px;
  display: flex;
  align-items: center;
  padding-left: 5px;
  background: #535353;
}

.fm-filters button svg {
  width: 16px;
  height: 16px;
  margin-left: 13px;
}

.fm-filters button .funnel {
  width: 22px;
  height: 14px;
  margin-left: 6px;
}

.fm-filters button .cloud {
  width: 18px;
}

.fm-filters .sample-pick {
  width: 150px;
  height: 24px;
  display: flex;
  align-items: center;
  justify-content: space-between;
  padding: 0 5px;
  border-bottom: 1px solid #8a8a8a;
}

.fm-filters .size {
  width: 22px;
  height: 22px;
  color: #b8b8b8;
  font-weight: 700;
}

.fm-filters .small {
  margin: 0 7px 0 6px;
  font-size: 9px;
}

.fm-filters .medium {
  border-radius: 3px;
  background: #2c2c2c;
  color: #ddd;
}

.fm-filters .large {
  margin: 0 5px 0 7px;
  font-size: 18px;
  line-height: 20px;
}

.fm-filters .sample-pick .chev {
  width: 8px;
  height: 8px;
}

.fm-activate {
  height: 21px;
  display: flex;
  align-items: center;
  gap: 9px;
  padding-left: 9px;
  padding-bottom: 2px;
  background: #4f4f4f;
  color: #f0f0f0;
}

.fm-activate svg {
  width: 18px;
  height: 14px;
}

.font-menu p {
  padding: 5px 0 0 11px;
  color: #808080;
  font-family: "DejaVu Sans Condensed", "DejaVu Sans", sans-serif;
  font-style: italic;
  line-height: 14px;
  white-space: nowrap;
}

.paragraph {
  padding-top: 141px;
  padding-bottom: 9px;
}

.aligns {
  display: flex;
  gap: 2px;
  padding-left: 1px;
}

.aligns button {
  width: 22px;
  height: 22px;
  display: grid;
  place-items: center;
  border-radius: 2px;
}

.aligns .on {
  background: #2c2c2c;
}

.aligns .last {
  margin-right: 3px;
}

.aligns svg {
  width: 16px;
  height: 18px;
  fill: none;
  stroke: #c8c8c8;
}

.dots {
  display: flex;
  gap: 2px;
  margin: 13px -9px 0 auto;
  padding: 1px 0;
}

.dots i {
  width: 4px;
  height: 4px;
  border-radius: 50%;
  background: #bbb;
}

.lists {
  padding-top: 12px;
  padding-bottom: 9px;
}

.list-row {
  display: flex;
  align-items: center;
  gap: 16px;
  margin-top: 7px;
  padding-left: 5px;
}

.list-row svg {
  width: 16px;
  height: 16px;
  fill: #c8c8c8;
}

.outlined {
  height: 21px;
  border: 1px solid #757575;
  border-radius: 3px;
}

.settings {
  width: 65px;
}

.quick {
  display: flex;
  flex-direction: column;
  gap: 10px;
  padding-top: 7px;
  border-bottom: 0;
}

.quick h2 {
  margin-bottom: -3px;
}

/* taskbar */
.taskbar {
  height: 48px;
  flex: none;
  display: grid;
  grid-template-columns: 1fr auto 1fr;
  align-items: center;
  background: linear-gradient(90deg, #614332, #5a3c30 16%, #5e4133 34%, #6a4c35 42%, #6a4b34 62%, #593a30 80%, #664b30 90%, #5e452d);
  color: #fff;
  line-height: 16px;
}

.weather {
  display: flex;
  align-items: center;
  gap: 7px;
  padding-left: 19px;
}

.weather svg {
  width: 24px;
  height: 18px;
}

.weather .dim {
  color: #d6c8c0;
}

.apps {
  display: flex;
  gap: 4px;
}

.app-button {
  position: relative;
  width: 40px;
  height: 40px;
  display: grid;
  place-items: center;
  border-radius: 4px;
}

.app-button svg {
  width: 24px;
  height: 24px;
}

.app-button.active {
  background: rgba(255, 255, 255, 0.08);
  box-shadow: inset 0 0 0 1px rgba(255, 255, 255, 0.06);
}

.app-button.running::after,
.app-button.active::after {
  content: "";
  position: absolute;
  bottom: 1px;
  left: 17px;
  width: 6px;
  height: 3px;
  border-radius: 2px;
  background: #b8a898;
}

.app-button.active::after {
  left: 12px;
  width: 16px;
  background: #dcc4a0;
}

.tray {
  display: flex;
  align-items: center;
  justify-content: flex-end;
  padding-right: 19px;
}

.tray svg {
  fill: none;
  stroke: #fff;
  stroke-width: 1.300;
}

.up {
  width: 12px;
  height: 12px;
  margin-right: 14px;
}

.wifi {
  width: 16px;
  height: 14px;
  margin-right: 8px;
}

.sound {
  width: 18px;
  height: 14px;
  margin-right: 16px;
}

.clock {
  text-align: right;
}
</style>
